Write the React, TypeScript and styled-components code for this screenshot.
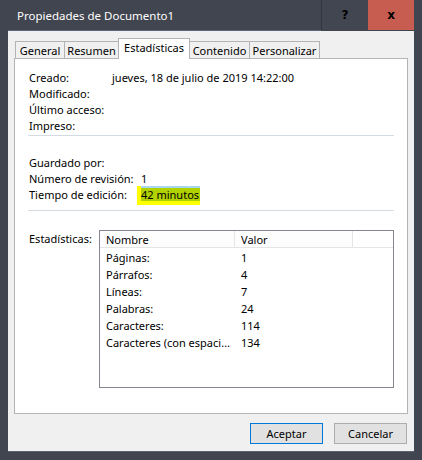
import styled, { createGlobalStyle } from 'styled-components';

const GlobalStyle = createGlobalStyle`
  html, body {
    margin: 0;
    padding: 0;
    background: #41454f;
  }
  body {
    font-family: 'Noto Sans', 'Open Sans', sans-serif;
    font-size: 11px;
    color: #000;
  }
`;

const Window = styled.div`
  width: 422px;
  height: 460px;
  box-sizing: border-box;
  background: #41454f;
  padding: 0 8px 8px;
  display: flex;
  flex-direction: column;
`;

const TitleBar = styled.div`
  height: 31px;
  display: flex;
  align-items: stretch;
`;

const Title = styled.div`
  flex: 1;
  display: flex;
  align-items: center;
  padding-left: 9px;
  color: #fff;
  font-size: 11.5px;
  border-bottom: 1px solid #5c667d;
`;

const CaptionButton = styled.div<{ $close?: boolean }>`
  width: ${p => (p.$close ? 46 : 47)}px;
  height: 30px;
  display: flex;
  align-items: center;
  justify-content: center;
  background: ${p => (p.$close ? '#c75c50' : '#424650')};
  border-left: ${p => (p.$close ? 'none' : '1px solid #33363d')};
  box-sizing: border-box;
  color: #000;
  font-family: 'DejaVu Sans', sans-serif;
  font-weight: bold;
  font-size: 12px;
`;

const Client = styled.div`
  flex: 1;
  background: #f0f0f0;
  border-bottom: 1px solid #5d6371;
  padding: 7px 6px 0 6px;
  display: flex;
  flex-direction: column;
`;

const TabStrip = styled.div`
  display: flex;
  align-items: flex-end;
  height: 20px;
  padding-left: 2px;
`;

const Tab = styled.div<{ $active?: boolean; $w: number }>`
  width: ${p => p.$w}px;
  height: ${p => (p.$active ? 21 : 17)}px;
  box-sizing: border-box;
  border: 1px solid #b4b4b4;
  border-bottom: none;
  margin-left: -1px;
  margin-bottom: ${p => (p.$active ? -1 : 0)}px;
  background: ${p => (p.$active ? '#fff' : '#f0f0f0')};
  position: relative;
  z-index: ${p => (p.$active ? 1 : 0)};
  display: flex;
  align-items: center;
  justify-content: center;
  padding-bottom: ${p => (p.$active ? 3 : 0)}px;
  white-space: nowrap;
`;

const Panel = styled.div`
  height: 356px;
  box-sizing: border-box;
  background: #fff;
  border: 1px solid #b4b4b4;
  padding: 10px 13px 0 13px;
  display: flex;
  flex-direction: column;
`;

const InfoGroup = styled.div<{ $labelW: number }>`
  display: grid;
  grid-template-columns: ${p => p.$labelW}px 1fr;
  grid-auto-rows: 16px;
  align-items: center;
  padding-left: 1px;
`;

const Label = styled.div`
  white-space: nowrap;
`;

const Value = styled.div`
  white-space: nowrap;
`;

const Separator = styled.div<{ $top: number; $bottom: number }>`
  height: 1px;
  background: #d5dbe3;
  margin: ${p => p.$top}px 0 ${p => p.$bottom}px;
`;

const Highlight = styled.span`
  display: inline-block;
  background: #ffff00;
  padding: 0 0 4px 4px;
  margin-left: -4px;
  margin-top: 2px;
  line-height: 13px;
`;

const HighlightInner = styled.span`
  display: inline-block;
  background: #b2d200;
  border-top: 2px solid #a9d7ee;
  padding-right: 1px;
`;

const StatsRow = styled.div`
  display: flex;
  align-items: flex-start;
`;

const StatsLabel = styled.div`
  width: 70px;
  padding-left: 1px;
  padding-top: 1px;
  line-height: 16px;
`;

const ListBox = styled.div`
  flex: 1;
  height: 158px;
  box-sizing: border-box;
  border: 1px solid #828790;
  background: #fff;
`;

const ListHeader = styled.div`
  display: flex;
  height: 17px;
  box-sizing: border-box;
  border-bottom: 1px solid #e5e5e5;
  margin-bottom: 1px;
`;

const HeaderCell = styled.div<{ $w: number }>`
  width: ${p => p.$w}px;
  box-sizing: border-box;
  border-right: 1px solid #e5e5e5;
  padding-left: 6px;
  display: flex;
  align-items: center;
  background: #fdfdfd;
`;

const ListRow = styled.div`
  display: grid;
  grid-template-columns: 135px 1fr;
  height: 17px;
  align-items: center;
`;

const Cell = styled.div`
  padding-left: 6px;
  white-space: nowrap;
  overflow: hidden;
  text-overflow: ellipsis;
  padding-right: 2px;
`;

const ButtonRow = styled.div`
  display: flex;
  justify-content: flex-end;
  gap: 11px;
  margin-top: 9px;
  padding-right: 1px;
`;

const Button = styled.button<{ $default?: boolean }>`
  width: 73px;
  height: 21px;
  box-sizing: border-box;
  background: #e1e1e1;
  border: 1px solid ${p => (p.$default ? '#0078d7' : '#adadad')};
  font-family: inherit;
  font-size: 11px;
  color: #000;
  padding: 0;
`;

const tabs = [
  { label: 'General', w: 50 },
  { label: 'Resumen', w: 55 },
  { label: 'Estadísticas', w: 72, active: true },
  { label: 'Contenido', w: 61 },
  { label: 'Personalizar', w: 71 },
];

const stats = [
  ['Páginas:', '1'],
  ['Párrafos:', '4'],
  ['Líneas:', '7'],
  ['Palabras:', '24'],
  ['Caracteres:', '114'],
  ['Caracteres (con espacios):', '134'],
];

export default function App() {
  return (
    <>
      <GlobalStyle />
      <Window>
        <TitleBar>
          <Title>Propiedades de Documento1</Title>
          <CaptionButton>?</CaptionButton>
          <CaptionButton $close>x</CaptionButton>
        </TitleBar>
        <Client>
          <TabStrip>
            {tabs.map(t => (
              <Tab key={t.label} $w={t.w} $active={t.active}>
                {t.label}
              </Tab>
            ))}
          </TabStrip>
          <Panel>
            <InfoGroup $labelW={83}>
              <Label>Creado:</Label>
              <Value>jueves, 18 de julio de 2019 14:22:00</Value>
              <Label>Modificado:</Label>
              <Value />
              <Label>Último acceso:</Label>
              <Value />
              <Label>Impreso:</Label>
              <Value />
            </InfoGroup>
            <Separator $top={2} $bottom={18} />
            <InfoGroup $labelW={112}>
              <Label>Guardado por:</Label>
              <Value />
              <Label>Número de revisión:</Label>
              <Value>1</Value>
              <Label>Tiempo de edición:</Label>
              <Value>
                <Highlight>
                  <HighlightInner>42 minutos</HighlightInner>
                </Highlight>
              </Value>
            </InfoGroup>
            <Separator $top={8} $bottom={19} />
            <StatsRow>
              <StatsLabel>Estadísticas:</StatsLabel>
              <ListBox>
                <ListHeader>
                  <HeaderCell $w={135}>Nombre</HeaderCell>
                  <HeaderCell $w={118}>Valor</HeaderCell>
                </ListHeader>
                {stats.map(([name, value]) => (
                  <ListRow key={name}>
                    <Cell>{name}</Cell>
                    <Cell>{value}</Cell>
                  </ListRow>
                ))}
              </ListBox>
            </StatsRow>
          </Panel>
          <ButtonRow>
            <Button $default>Aceptar</Button>
            <Button>Cancelar</Button>
          </ButtonRow>
        </Client>
      </Window>
    </>
  );
}
